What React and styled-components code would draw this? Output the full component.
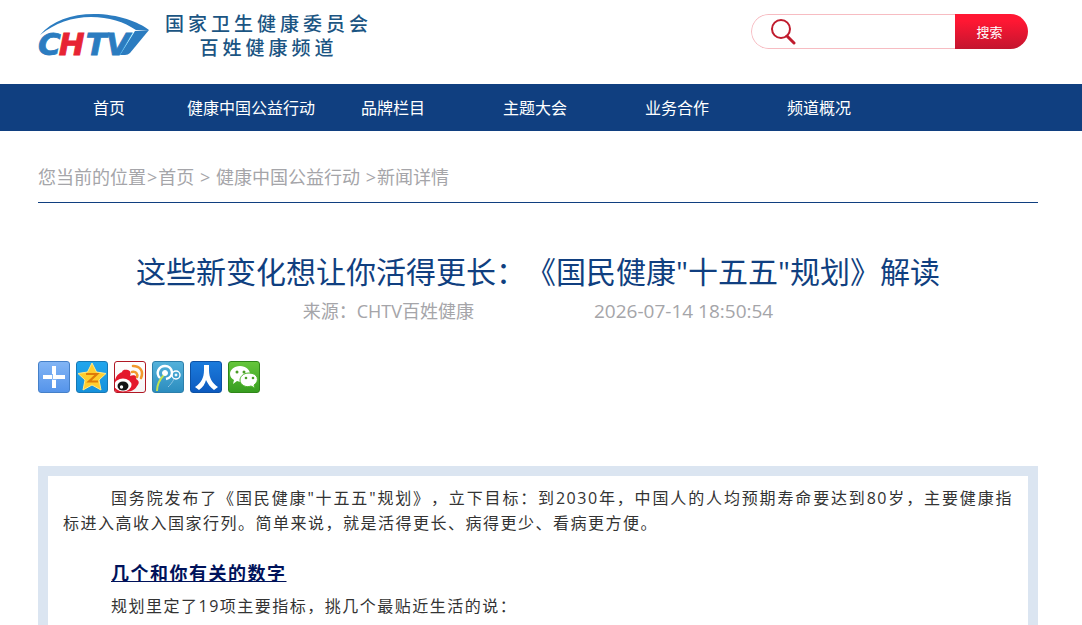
import React from 'react';

import styled, { createGlobalStyle } from 'styled-components';

const GlobalStyle = createGlobalStyle`
    * {
        box-sizing: border-box;
    }

    body {
        margin: 0;
        background: #FFF;
        color: #333;
        font-family: "Open Sans", "Noto Sans CJK SC", sans-serif;
        font-size: 16px;
        text-spacing-trim: space-all;
    }
`;

const Page = styled.div`
    min-height: 100vh;
    display: flex;
    flex-direction: column;
`;

const Header = styled.header`
    height: 84px;
    padding: 12px 54px 0 38px;
    display: flex;
    justify-content: space-between;
    align-items: flex-start;
`;

const Brand = styled.a`
    display: flex;
    gap: 14px;
    color: #1b5583;
    text-decoration: none;
`;

const BrandName = styled.span`
    font-size: 19px;
    font-weight: 500;
    line-height: 24px;
    letter-spacing: 4px;
    text-align: center;
`;

const SearchForm = styled.form`
    width: 277px;
    height: 35px;
    margin-top: 2px;
    display: flex;
    border-radius: 18px;
    overflow: hidden;
`;

const SearchLabel = styled.label`
    flex: 1;
    min-width: 0;
    padding-left: 18px;
    display: flex;
    align-items: center;
    gap: 8px;
    border: 1px solid #f7bcc2;
    border-right: 0;
    border-radius: 18px 0 0 18px;
`;

const SearchInput = styled.input`
    flex: 1;
    min-width: 0;
    border: 0;
    outline: 0;
    background: none;
    font: inherit;
`;

const SearchButton = styled.button`
    width: 73px;
    padding: 0 4px 0 0;
    border: 0;
    background: linear-gradient(#ff1733 20%, #c3152f);
    color: #FFF;
    font-family: inherit;
    font-size: 13px;
    cursor: pointer;
`;

const Nav = styled.nav`
    height: 47px;
    padding: 0 38px;
    display: flex;
    background: #103f80;
`;

const NavLink = styled.a`
    flex: 0 0 142px;
    color: #FFF;
    font-size: 16px;
    line-height: 48px;
    text-align: center;
    text-decoration: none;
    white-space: nowrap;
`;

const Main = styled.main`
    flex: 1;
    padding: 0 44px 0 38px;
    display: flex;
    flex-direction: column;
`;

const Breadcrumb = styled.div`
    height: 72px;
    padding-top: 32px;
    border-bottom: 1px solid #103f80;
    color: #a5a5a9;
    font-size: 18px;
    line-height: 28px;

    a {
        color: inherit;
        text-decoration: none;
    }
`;

const Separator = styled.span`
    margin: 0 1px;
`;

const Title = styled.h1`
    margin: 48px 0 0;
    color: #103f80;
    font-size: 30px;
    font-weight: 400;
    line-height: 42px;
    text-align: center;
`;

const Meta = styled.div`
    padding-top: 4px;
    display: flex;
    justify-content: center;
    gap: 120px;
    color: #a5a5a9;
    font-size: 18px;
    line-height: 28px;
`;

const PublishTime = styled.time`
    font-size: 19px;
`;

const ShareBar = styled.div`
    margin: 36px 0 73px;
    display: flex;
    gap: 6px;
`;

const ShareButton = styled.button`
    width: 32px;
    height: 32px;
    padding: 0;
    border: 1px solid ${props => props.$edge};
    border-radius: 3px;
    background: linear-gradient(${props => props.$from}, ${props => props.$to});
    overflow: hidden;
    cursor: pointer;

    svg {
        display: block;
    }
`;

const Article = styled.article`
    flex: 1;
    padding: 10px 15px 0;
    border: 10px solid #dbe5f1;
    border-bottom: 0;
    font-size: 15px;
    letter-spacing: 0.1em;
`;

const Paragraph = styled.p`
    margin: 0;
    font-size: 16px;
    line-height: 25px;
    text-align: justify;
    text-indent: 48px;
`;

const SubHeading = styled.h2`
    margin: 24px 0 8px 48px;
    color: #00125a;
    font-size: 18px;
    font-weight: 700;
    line-height: 26px;
    text-decoration: underline;
`;

const Logo = () => (
    <svg width="113" height="54" viewBox="0 0 113 54" role="img" aria-label="CHTV">
        <path d="M2 23 C14 9 33 2 56 2 C80 2 101 10 111 18 L98 18 C86 10 71 5 53 5 C34 5 17 11 2 23 Z" fill="#2b7cc0" />
        <text x="0" y="43" fontFamily="DejaVu Sans" fontSize="31" fontWeight="700" fontStyle="italic" strokeWidth="0.8" fill="#2b7cc0" stroke="#2b7cc0">
            C<tspan dx="-2" fill="#e72433" stroke="#e72433">H</tspan><tspan dx="1">T</tspan><tspan dx="-1">V</tspan>
        </text>
        <path d="M82 43 L97 19 L111 18 L92 41 Q90 43 87 43 Z" fill="#2b7cc0" />
    </svg>
);

const SearchIcon = () => (
    <svg width="26" height="26" viewBox="0 0 26 26" fill="none" stroke="#c01c2e">
        <circle cx="11" cy="10" r="9" strokeWidth="2" />
        <path d="M17 17 L24 24" strokeWidth="3" strokeLinecap="round" />
    </svg>
);

const PlusIcon = () => (
    <svg width="30" height="30" viewBox="1 1 30 30">
        <path d="M14 5h4v9h9v4h-9v9h-4v-9H5v-4h9z" fill="#FFF" />
        <path d="M14.5 13v5.5h4" fill="none" stroke="#8dbaf3" />
    </svg>
);

const StarIcon = () => (
    <svg width="30" height="30" viewBox="1 1 30 30">
        <path d="M16 2 L20.5 11 L30 12.5 L23 19 L25 29 L16 24 L7 29 L9 19 L2 12.5 L11.5 11 Z" fill="#ffce2e" stroke="#ffe98a" strokeLinejoin="round" />
        <path d="M10 13h11l-8 7.5h9" fill="none" stroke="#df7d08" strokeWidth="2.2" />
    </svg>
);

const WeiboIcon = () => (
    <svg width="30" height="30" viewBox="1 1 30 30">
        <path d="M1 19 C3 13 6 12 8 11 C9 8 12 9 14 9 C17 10 17 13 16 15 C20 13 24 15 22 18 C26 20 25 23 23 25 C22 28 17 31 11 31 L1 31 Z" fill="#e4182c" />
        <ellipse cx="9" cy="24" rx="8.5" ry="6.5" fill="#FFF" />
        <ellipse cx="9" cy="25" rx="5.5" ry="4.5" fill="#151515" />
        <circle cx="7.5" cy="26" r="1.7" fill="#FFF" />
        <path d="M19 5 C26 5 30 10 27 17 M18 11 C22 10 24 13 23 16" fill="none" stroke="#f2992e" strokeWidth="2.6" strokeLinecap="round" />
    </svg>
);

const TencentIcon = () => (
    <svg width="30" height="30" viewBox="1 1 30 30" fill="none" stroke="#FFF">
        <path d="M5 30 C5 25 7 19 12 14" stroke="#c3e34f" strokeWidth="2" />
        <path d="M8 17 C3 12 7 5 13 5 C21 5 23 16 14 18" strokeWidth="2.4" />
        <circle cx="13" cy="12" r="2.5" fill="#FFF" />
        <circle cx="24" cy="14" r="4" strokeWidth="1.4" />
        <circle cx="24" cy="14" r="1" fill="#FFF" />
        <path d="M22 18 C20 22 18 24 16 26" stroke="#8ac4e4" />
    </svg>
);

const RenrenIcon = () => (
    <svg width="30" height="30" viewBox="1 1 30 30">
        <path d="M14 4h5v5c0 8 3 13 9 17l-4 3c-4-3-6-6-8-10c-1 4-3 7-7 10l-4-3c6-4 9-9 9-17z" fill="#FFF" />
    </svg>
);

const WechatIcon = () => (
    <svg width="30" height="30" viewBox="1 1 30 30">
        <path d="M12 5 C6 5 2 9 2 13 C2 16 4 18 6 19 L5 23 L9 20 C17 23 22 18 22 13 C22 9 18 5 12 5 Z" fill="#FFF" />
        <path d="M21 12 C15 12 12 16 12 19 C12 24 18 27 23 25 L27 27 L26 24 C32 20 30 12 21 12 Z" fill="#FFF" stroke="#4fb52b" />
        <g fill="#4b9d26">
            <circle cx="9" cy="11" r="1.5" />
            <circle cx="16" cy="11" r="1.5" />
            <circle cx="18" cy="17" r="1.3" />
            <circle cx="25" cy="17" r="1.3" />
        </g>
    </svg>
);

const navItems = ['首页', '健康中国公益行动', '品牌栏目', '主题大会', '业务合作', '频道概况'];

const shareItems = [
    { label: '更多', edge: '#4580c8', from: '#82b5f5', to: '#5594ea', Icon: PlusIcon },
    { label: 'QQ空间', edge: '#1678b4', from: '#21a6ed', to: '#1691dc', Icon: StarIcon },
    { label: '新浪微博', edge: '#b01824', from: '#ffffff', to: '#f4f4f4', Icon: WeiboIcon },
    { label: '腾讯微博', edge: '#2d7fab', from: '#54b1da', to: '#2c8dbf', Icon: TencentIcon },
    { label: '人人网', edge: '#0c51a4', from: '#1b7bdc', to: '#0d5abf', Icon: RenrenIcon },
    { label: '微信', edge: '#2f8618', from: '#65c63b', to: '#379d20', Icon: WechatIcon },
];

const App = () => {

    return(
        <Page>
            <GlobalStyle />

            <Header>
                <Brand href="#">
                    <Logo />
                    <BrandName>
                        国家卫生健康委员会<br />
                        百姓健康频道
                    </BrandName>
                </Brand>
                <SearchForm onSubmit={ev=> ev.preventDefault()}>
                    <SearchLabel>
                        <SearchIcon />
                        <SearchInput type="text" aria-label="搜索" />
                    </SearchLabel>
                    <SearchButton type="submit">搜索</SearchButton>
                </SearchForm>
            </Header>

            <Nav>
                {navItems.map(item=> <NavLink href="#" key={item}>{item}</NavLink>)}
            </Nav>

            <Main>
                <Breadcrumb>
                    您当前的位置<Separator>&gt;</Separator><a href="#">首页</a> <Separator>&gt;</Separator> <a href="#">健康中国公益行动</a> <Separator>&gt;</Separator>新闻详情
                </Breadcrumb>

                <Title>这些新变化想让你活得更长：《国民健康"十五五"规划》解读</Title>
                <Meta>
                    <span>来源：CHTV百姓健康</span>
                    <PublishTime>2026-07-14 18:50:54</PublishTime>
                </Meta>

                <ShareBar>
                    {shareItems.map(({ label, edge, from, to, Icon })=> (
                        <ShareButton type="button" key={label} aria-label={label} $edge={edge} $from={from} $to={to}>
                            <Icon />
                        </ShareButton>
                    ))}
                </ShareBar>

                <Article>
                    <Paragraph>
                        国务院发布了《国民健康"十五五"规划》，立下目标：到2030年，中国人的人均预期寿命要达到80岁，主要健康指标进入高收入国家行列。简单来说，就是活得更长、病得更少、看病更方便。
                    </Paragraph>
                    <SubHeading>几个和你有关的数字</SubHeading>
                    <Paragraph>规划里定了19项主要指标，挑几个最贴近生活的说：</Paragraph>
                </Article>
            </Main>
        </Page>
    )
}

export default App;
